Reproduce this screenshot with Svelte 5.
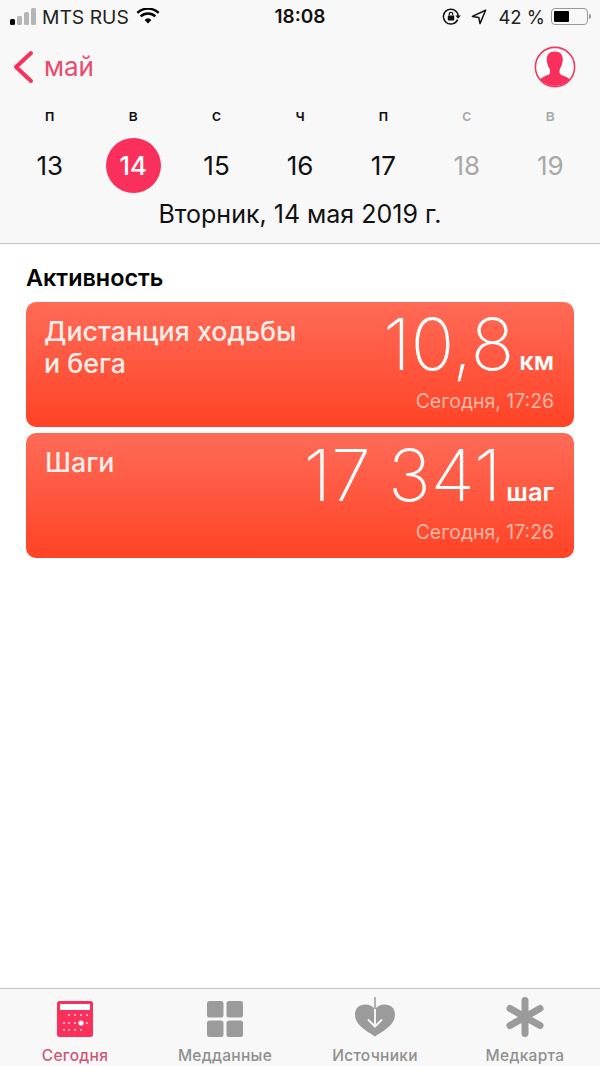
<script>
	const week = [
		{ letter: 'п', day: 13 },
		{ letter: 'в', day: 14, active: true },
		{ letter: 'с', day: 15 },
		{ letter: 'ч', day: 16 },
		{ letter: 'п', day: 17 },
		{ letter: 'с', day: 18, off: true },
		{ letter: 'в', day: 19, off: true }
	];

	const cards = [
		{ title: ['Дистанция ходьбы', 'и бега'], value: '10,8', unit: 'км', time: 'Сегодня, 17:26' },
		{ title: ['Шаги'], value: '17 341', unit: 'шаг', time: 'Сегодня, 17:26', small: true }
	];

	// calendar tab icon, dots by row
	const dots = [
		[12, 14], [18, 14], [24, 14], [30, 14],
		[7, 22], [12, 22], [18, 22], [30, 22],
		[7, 29], [12, 29], [18, 29], [24, 29]
	];
</script>

<div class="screen">
	<header class="top">
		<div class="status">
			<div class="status-left">
				<div class="signal">
					<i class="on h1"></i><i class="h2"></i><i class="h3"></i><i class="h4"></i>
				</div>
				<span class="carrier">MTS RUS</span>
				<svg class="wifi" width="24" height="17" viewBox="0 0 24 17">
					<path d="M12 15.5 8.6 11.9a5 5 0 0 1 6.8 0Z" fill="#000" />
					<path d="M4.7 8.4a10.6 10.6 0 0 1 14.6 0" fill="none" stroke="#000" stroke-width="2.4" />
					<path d="M1.3 4.9a15.6 15.6 0 0 1 21.4 0" fill="none" stroke="#000" stroke-width="2.4" />
				</svg>
			</div>
			<div class="clock">18:08</div>
			<div class="status-right">
				<svg width="20" height="18" viewBox="0 0 20 18">
					<path d="M15.6 11.6A7.4 7.4 0 1 1 16.2 8" fill="none" stroke="#111" stroke-width="1.5" />
					<path d="M13.4 7.6h5.4l-2.7 3.2Z" fill="#111" />
					<rect x="5.8" y="7.6" width="6.4" height="5" rx=".8" fill="#111" />
					<path d="M7.2 7.6V6.2a1.8 1.8 0 0 1 3.6 0v1.4" fill="none" stroke="#111" stroke-width="1.2" />
				</svg>
				<svg class="arrow" width="16" height="16" viewBox="0 0 16 16">
					<path d="M14.6 1.2 1.4 7.4l6.4 1 1.2 6.2Z" fill="none" stroke="#111" stroke-width="1.5" stroke-linejoin="round" />
				</svg>
				<span class="pct">42 %</span>
				<div class="battery"><div class="charge"></div></div>
				<div class="nub"></div>
			</div>
		</div>

		<div class="nav">
			<div class="back">
				<svg width="22" height="34" viewBox="0 0 22 34">
					<path d="M19 3 4 17l15 14" fill="none" stroke="#fb2f5b" stroke-width="4" stroke-linecap="round" stroke-linejoin="round" />
				</svg>
				<span>май</span>
			</div>
			<svg class="avatar" width="42" height="42" viewBox="0 0 42 42">
				<defs>
					<clipPath id="avatar-clip"><circle cx="21" cy="21" r="19" /></clipPath>
				</defs>
				<circle cx="21" cy="21" r="19.6" fill="#fff" stroke="#f2395f" stroke-width="1.6" />
				<g clip-path="url(#avatar-clip)" fill="#fb2f5b">
					<path d="M21 5.5c-6.4 0-8.6 4-8.2 9 .3 3.6 1.3 6 2.7 8.2.7 1.2.7 3.4.2 4.9-.5 1-2.2 1.800-5.400 2.900C8 31.600 4.500 33 4 42h34c-.5-9-4-10.400-6.800-11.500-3.300-1.100-5-1.900-5.400-2.900-.5-1.500-.5-3.700.2-4.900 1.400-2.200 2.400-4.600 2.700-8.200.4-5-1.800-9-7.700-9Z" />
				</g>
			</svg>
		</div>

		<div class="week">
			{#each week as d}
				<div class="col" class:off={d.off}>
					<div class="letter">{d.letter}</div>
					<div class="day" class:active={d.active}>{d.day}</div>
				</div>
			{/each}
		</div>

		<div class="date">Вторник, 14 мая 2019 г.</div>
	</header>

	<main class="content">
		<h2>Активность</h2>
		<div class="cards">
			{#each cards as c}
				<div class="card">
					<div class="title" class:small={c.small}>
						{#each c.title as line}<div>{line}</div>{/each}
					</div>
					<div class="right">
						<div class="reading">
							<span class="value">{c.value}</span><span class="unit">{c.unit}</span>
						</div>
						<div class="time">{c.time}</div>
					</div>
				</div>
			{/each}
		</div>
	</main>

	<nav class="tabs">
		<div class="tab active">
			<svg width="36" height="36" viewBox="0 0 36 36">
				<rect width="36" height="36" rx="2.5" fill="#fb2f5b" />
				<rect x="3" y="3" width="30" height="6" fill="#fff" />
				{#each dots as [x, y]}
					<circle cx={x} cy={y} r="1" fill="#fff" opacity=".8" />
				{/each}
				<circle cx="24" cy="22" r="2.6" fill="#fff" />
			</svg>
			<span>Сегодня</span>
		</div>
		<div class="tab">
			<svg width="36" height="36" viewBox="0 0 36 36" fill="#9b9b9b">
				<rect width="16.5" height="16.5" rx="2.5" />
				<rect x="19.5" width="16.5" height="16.5" rx="2.5" />
				<rect y="19.5" width="16.5" height="16.5" rx="2.5" />
				<rect x="19.5" y="19.5" width="16.5" height="16.5" rx="2.5" />
			</svg>
			<span>Медданные</span>
		</div>
		<div class="tab">
			<svg width="42" height="40" viewBox="0 0 42 40">
				<path d="M21 39.5C15 35 1 29 1 17.5 1 11 5.5 7.5 11 7.5c4.500 0 8 2 10 4.500 2-2.500 5.500-4.500 10-4.500 5.500 0 10 3.500 10 10C41 29 27 35 21 39.500Z" fill="#9b9b9b" />
				<path d="M21 12v17M14 22.500l7 7 7-7" fill="none" stroke="#f4f4f4" stroke-width="2" />
				<path d="M21 0v12" fill="none" stroke="#9b9b9b" stroke-width="1.5" />
			</svg>
			<span>Источники</span>
		</div>
		<div class="tab">
			<svg width="40" height="40" viewBox="0 0 40 40" stroke="#9b9b9b" stroke-width="7" stroke-linecap="round">
				<path d="M20 3.500v33M5 11.500l30 17M35 11.500l-30 17" />
			</svg>
			<span>Медкарта</span>
		</div>
	</nav>
</div>

<style>
	:global(body) {
		margin: 0;
		background: #fff;
	}
	.screen {
		width: 600px;
		height: 1066px;
		display: flex;
		flex-direction: column;
		font-family: Inter, 'Noto Sans', sans-serif;
		color: #000;
		overflow: hidden;
	}

	/* ---- header ---- */
	.top {
		height: 244px;
		box-sizing: border-box;
		background: #f8f8f8;
		border-bottom: 1px solid #c4c4c4;
	}
	.status {
		height: 33px;
		display: grid;
		grid-template-columns: 1fr auto 1fr;
		align-items: center;
		padding: 0 9px;
		font-size: 19px;
	}
	.status-left {
		display: flex;
		align-items: center;
		gap: 6px;
	}
	.signal {
		display: flex;
		align-items: flex-end;
		gap: 2px;
		height: 17px;
		margin-left: 1px;
	}
	.signal i {
		width: 5px;
		border-radius: 1.5px;
		background: #b5b5b5;
	}
	.signal i.on {
		background: #000;
	}
	.h1 { height: 6px; }
	.h2 { height: 9px; }
	.h3 { height: 13px; }
	.h4 { height: 17px; }
	.carrier {
		color: #222;
		font-size: 19.3px;
		margin-right: 1px;
	}
	.clock {
		font-weight: 600;
		color: #111;
	}
	.status-right {
		display: flex;
		justify-content: flex-end;
		align-items: center;
		color: #222;
	}
	.arrow {
		margin-left: 9px;
	}
	.pct {
		margin-left: 11px;
		margin-right: 6px;
		font-size: 18.5px;
	}
	.battery {
		width: 31px;
		height: 11px;
		border: 1.5px solid #999;
		border-radius: 4px;
		padding: 2px;
	}
	.charge {
		width: 15px;
		height: 11px;
		background: #000;
		border-radius: 1px;
	}
	.nub {
		width: 2px;
		height: 5px;
		margin-left: 1px;
		background: #999;
		border-radius: 0 2px 2px 0;
	}
	.nav {
		height: 67px;
		display: flex;
		justify-content: space-between;
		align-items: center;
		padding: 0 24px 0 12px;
	}
	.back {
		display: flex;
		align-items: center;
		gap: 10px;
		color: #ea4a6c;
		font-size: 26px;
	}
	.week {
		display: grid;
		grid-template-columns: repeat(7, 1fr);
		padding: 5px 8px 0;
	}
	.col {
		display: flex;
		flex-direction: column;
		align-items: center;
	}
	.letter {
		font-size: 16.5px;
		font-weight: 500;
		line-height: 20px;
		height: 20px;
		color: #111;
	}
	.day {
		width: 55px;
		height: 55px;
		margin-top: 13px;
		border-radius: 50%;
		display: flex;
		align-items: center;
		justify-content: center;
		font-size: 26px;
		color: #111;
	}
	.day.active {
		background: #fb2f5b;
		color: #fff;
		font-weight: 500;
	}
	.off .letter,
	.off .day {
		color: #a8a8a8;
	}
	.date {
		text-align: center;
		font-size: 25px;
		line-height: 28px;
		margin-top: 7px;
		color: #111;
	}

	/* ---- content ---- */
	.content {
		flex: 1;
		padding: 0 26px;
	}
	h2 {
		margin: 21px 0 0;
		font-size: 23.4px;
		line-height: 26px;
		font-weight: 600;
	}
	.cards {
		margin-top: 11px;
		display: flex;
		flex-direction: column;
		gap: 6px;
	}
	.card {
		height: 125px;
		box-sizing: border-box;
		padding: 13px 20px 0 18px;
		border-radius: 10px;
		background: linear-gradient(#ff6b58, #ff4326);
		color: #fff;
		display: flex;
		justify-content: space-between;
	}
	.title {
		font-size: 26.8px;
		line-height: 32px;
		font-weight: 500;
		color: #fdeee9;
		white-space: nowrap;
	}
	.title.small {
		margin-left: 1px;
	}
	.right {
		display: flex;
		flex-direction: column;
		align-items: flex-end;
		margin-top: -6px;
	}
	.reading {
		display: flex;
		align-items: baseline;
		gap: 5px;
		height: 80px;
	}
	.value {
		font-size: 72px;
		font-weight: 250;
		line-height: 70px;
		white-space: nowrap;
		word-spacing: -3px;
	}
	.unit {
		font-size: 25.5px;
		font-weight: 600;
	}
	.time {
		font-size: 19.4px;
		line-height: 24px;
		color: #ffb9a6;
	}

	/* ---- tab bar ---- */
	.tabs {
		height: 78px;
		box-sizing: border-box;
		border-top: 1px solid #c4c4c4;
		background: #f8f8f8;
		display: grid;
		grid-template-columns: repeat(4, 1fr);
	}
	.tab {
		display: flex;
		flex-direction: column;
		align-items: center;
		justify-content: flex-end;
		padding-bottom: 1px;
		color: #8f8f8f;
		font-size: 15.5px;
		font-weight: 500;
		letter-spacing: .3px;
	}
	.tab svg {
		margin-bottom: 9px;
	}
	.tab.active {
		color: #d0557a;
	}
</style>
